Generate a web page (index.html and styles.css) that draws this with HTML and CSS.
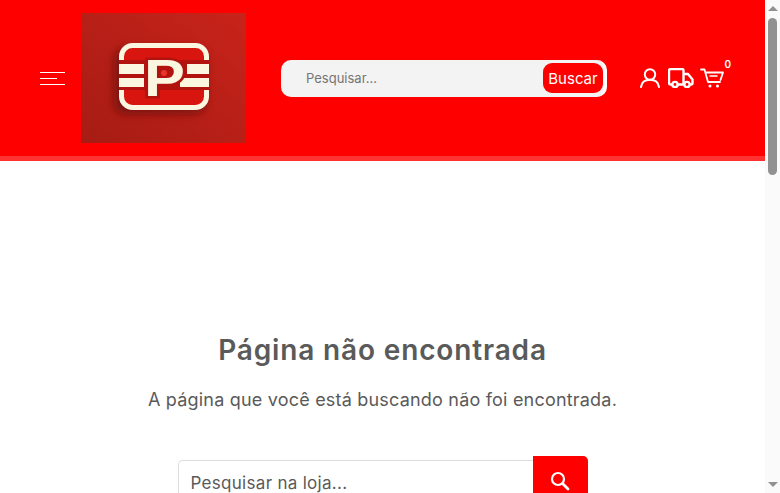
FILE: index.html
```html
<!DOCTYPE html>
<html lang="pt-BR">
<head>
    <meta charset="UTF-8">
    <meta name="viewport" content="width=device-width, initial-scale=1.0">
    <title>Página não encontrada</title>
    <link rel="stylesheet" href="styles.css">
</head>
<body>
<div class="page">
    <!-- Header -->
    <header class="header">
        <button class="menu-toggle" aria-label="Menu">
            <span class="line"></span>
            <span class="line short"></span>
            <span class="line"></span>
        </button>

        <svg class="logo" viewBox="0 0 165 130" role="img" aria-label="Logo">
            <defs>
                <linearGradient id="logoBack" x1="1" y1="0" x2="0" y2="1">
                    <stop offset="0" stop-color="#c8231a"/>
                    <stop offset="1" stop-color="#a61c14"/>
                </linearGradient>
                <filter id="logoShadow" x="-20%" y="-20%" width="140%" height="140%">
                    <feGaussianBlur stdDeviation="4"/>
                </filter>
            </defs>
            <rect width="165" height="130" fill="url(#logoBack)"/>
            <rect x="33" y="35" width="92" height="66" rx="12" fill="#5e0c08" opacity="0.65" filter="url(#logoShadow)"/>
            <rect x="40.500" y="32.500" width="85" height="62" rx="11" fill="#d9150f" stroke="#fbf6e0" stroke-width="5"/>
            <rect x="38" y="47" width="90" height="30" fill="#b3130e"/>
            <rect x="38" y="51" width="25" height="10" fill="#fbf6e0"/>
            <rect x="38" y="65" width="25" height="9" fill="#fbf6e0"/>
            <rect x="106" y="51" width="22" height="10" fill="#fbf6e0"/>
            <rect x="99" y="65" width="29" height="9" fill="#fbf6e0"/>
            <text class="logo-letter" transform="translate(63 83) scale(1.18 1)">P</text>
            <circle cx="83" cy="60" r="3" fill="#e8352a"/>
        </svg>

        <form class="top-search">
            <span class="top-search-text">Pesquisar...</span>
            <button type="button" class="top-search-btn">Buscar</button>
        </form>

        <div class="header-icons">
            <svg class="icon-user" viewBox="0 0 20 20" fill="none" stroke="#fff" stroke-width="2" stroke-linecap="round">
                <circle cx="10" cy="6.500" r="5.200"/>
                <path d="M1 19c.6-4.600 4-7.300 9-7.300s8.400 2.700 9 7.300"/>
            </svg>
            <svg class="icon-truck" viewBox="0 0 26 20" fill="none" stroke="#fff" stroke-width="2.400" stroke-linejoin="round">
                <path d="M4 16.500H2.500a1.500 1.500 0 0 1-1.500-1.500V3a2 2 0 0 1 2-2h11a1.500 1.500 0 0 1 1.500 1.500V16.500H10"/>
                <path d="M15.500 6H20l4.500 5.500v3.500a1.500 1.500 0 0 1-1.500 1.500h-1.500M16 16.500h.5"/>
                <circle cx="7" cy="16.500" r="2.600"/>
                <circle cx="19" cy="16.500" r="2.600"/>
            </svg>
            <div class="cart">
                <svg class="icon-cart" viewBox="0 0 24 20" fill="none" stroke="#fff" stroke-width="1.800" stroke-linejoin="round" stroke-linecap="round">
                    <path d="M1 1.500h3.500L8 14h12"/>
                    <path d="M6.500 4.500 H23 L20.500 12"/>
                    <path d="M10 8h7" stroke-width="1.500"/>
                    <circle cx="10" cy="18" r="1.500" fill="#fff" stroke="none"/>
                    <circle cx="17.500" cy="18" r="1.500" fill="#fff" stroke="none"/>
                </svg>
                <span class="cart-count">0</span>
            </div>
        </div>
    </header>

    <!-- Not found -->
    <main class="not-found">
        <h1>Página não encontrada</h1>
        <p>A página que você está buscando não foi encontrada.</p>
        <form class="store-search">
            <span class="store-search-text">Pesquisar na loja...</span>
            <button type="button" class="store-search-btn" aria-label="Buscar">
                <svg viewBox="0 0 20 20" fill="none" stroke="#fff" stroke-width="2.200" stroke-linecap="round">
                    <circle cx="8" cy="8" r="6"/>
                    <path d="M12.500 12.500 18 18" stroke-width="2.800"/>
                </svg>
            </button>
        </form>
    </main>
</div>

<!-- Scrollbar -->
<div class="scrollbar">
    <span class="arrow-up"></span>
    <span class="thumb"></span>
    <span class="arrow-down"></span>
</div>
</body>
</html>
```

FILE: styles.css
```css
/* General Reset */
html, body {
    height: 100%;
}

body {
    margin: 0;
    display: flex;
    overflow: hidden;
    background: #ffffff;
    font-family: "Inter", "Liberation Sans", sans-serif;
    color: #5a5a5a;
}

.page {
    flex: 1;
    min-width: 0;
    overflow: hidden;
}

/* Header */
.header {
    height: 156px;
    background: #ff0000;
    border-bottom: 5px solid #ff3131;
    display: flex;
    align-items: center;
    padding-left: 40px;
}

.menu-toggle {
    width: 25px;
    padding: 0;
    border: none;
    background: none;
    display: flex;
    flex-direction: column;
    gap: 5px;
    margin-right: 16px;
}

.line {
    display: block;
    height: 1px;
    background: #ffffff;
}

.line.short {
    width: 17px;
}

.logo {
    width: 165px;
    height: 130px;
    margin-top: -1px;
    margin-right: 35px;
}

.logo-letter {
    font-family: "Liberation Sans", sans-serif;
    font-weight: bold;
    font-size: 52px;
    fill: #fbf6e0;
    stroke: #b3130e;
    stroke-width: 5px;
    paint-order: stroke;
}

/* Top search */
.top-search {
    width: 326px;
    height: 37px;
    margin-right: 33px;
    box-sizing: border-box;
    background: #f3f3f3;
    border-right: 3px solid #ffffff;
    border-radius: 10px;
    display: flex;
    align-items: center;
    justify-content: space-between;
    padding-left: 25px;
    padding-right: 1px;
}

.top-search-text {
    font-size: 13px;
    color: #757575;
}

.top-search-btn {
    height: 30px;
    width: 60px;
    padding: 0;
    border: none;
    border-radius: 9px;
    background: #ff0000;
    color: #ffffff;
    font-family: inherit;
    font-size: 15px;
}

.header-icons {
    display: flex;
    align-items: flex-end;
    gap: 6px;
    margin-top: -1px;
}

.icon-user {
    width: 20px;
    height: 20px;
    margin-right: 2px;
}

.icon-truck {
    width: 26px;
    height: 20px;
}

.cart {
    position: relative;
}

.icon-cart {
    display: block;
    width: 24px;
    height: 20px;
}

.cart-count {
    position: absolute;
    top: -10px;
    right: -7px;
    font-size: 10px;
    font-weight: 600;
    color: #ffffff;
}

/* Not found */
.not-found {
    display: flex;
    flex-direction: column;
    align-items: center;
    padding-top: 171px;
}

.not-found h1 {
    margin: 0;
    font-size: 28px;
    line-height: 36px;
    font-weight: 600;
    letter-spacing: 0.85px;
}

.not-found p {
    margin: 19px 0 0;
    font-size: 18px;
    line-height: 26px;
    letter-spacing: 0.2px;
}

.store-search {
    width: 410px;
    height: 60px;
    margin-top: 43px;
    display: flex;
    align-items: flex-start;
}

.store-search-text {
    flex: 1;
    box-sizing: border-box;
    height: 56px;
    margin-top: 4px;
    padding: 12px 12px 0;
    border: 1px solid #dddddd;
    border-right: none;
    border-radius: 5px 0 0 5px;
    font-size: 17px;
    letter-spacing: 0.3px;
}

.store-search-btn {
    width: 55px;
    height: 60px;
    padding: 6px 0 0;
    border: none;
    border-radius: 0 5px 5px 0;
    background: #ff0000;
    display: flex;
    justify-content: center;
}

.store-search-btn svg {
    width: 20px;
    height: 20px;
    margin-top: 9px;
}

/* Scrollbar */
.scrollbar {
    width: 15px;
    flex: none;
    height: 100%;
    background: #fafafa;
    display: flex;
    flex-direction: column;
    align-items: center;
    padding: 6px 0;
    box-sizing: border-box;
}

.arrow-up,
.arrow-down {
    width: 0;
    height: 0;
    border-left: 5px solid transparent;
    border-right: 5px solid transparent;
}

.arrow-up {
    border-bottom: 5px solid #919191;
}

.arrow-down {
    border-top: 5px solid #919191;
    margin-top: auto;
}

.thumb {
    width: 9px;
    height: 157px;
    margin-top: 7px;
    border-radius: 5px;
    background: #919191;
}
```
